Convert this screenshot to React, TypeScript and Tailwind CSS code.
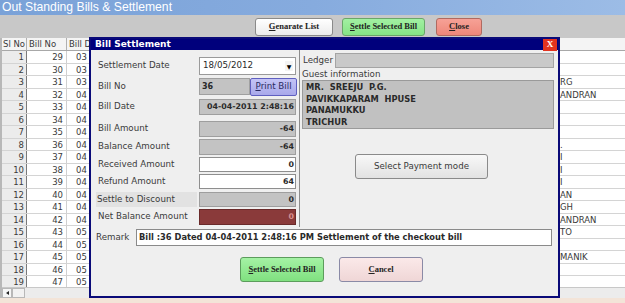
import React from 'react';

const sans = "font-['DejaVu_Sans',Verdana,sans-serif]";
const serif = "font-['Liberation_Serif',serif]";

const nameBits: Record<number, string> = {
  3: 'RG',
  4: 'ANDRAN',
  8: '.',
  9: 'I',
  10: 'I',
  11: 'I',
  12: 'AN',
  13: 'GH',
  14: 'ANDRAN',
  15: 'TO',
  17: 'MANIK',
};

// only the part of each row left visible beside the dialog
const rows = Array.from({ length: 19 }, (_, i) => {
  const sl = i + 1;
  const month = sl <= 3 ? '03' : sl <= 14 ? '04' : '05';
  return { sl, bill: 29 + i, date: month, name: nameBits[sl] ?? '' };
});

function BillGrid() {
  return (
    <div className={`flex h-[260px] flex-col border-l-2 border-[#b8b8b8] bg-white text-[8.5px] text-[#3a3a3a] ${sans}`}>
      <div className="flex h-[13px] shrink-0 border-b border-[#a8a8a8] bg-[#f4f4f4]">
        <div className="w-[25px] border-r border-[#b0b0b0] pl-[1px] leading-[12px]">Sl No</div>
        <div className="w-[40px] border-r border-[#b0b0b0] pl-[2px] leading-[12px]">Bill No</div>
        <div className="w-[92px] border-r border-[#b0b0b0] pl-[2px] leading-[12px]">Bill D</div>
        <div className="w-[400px] border-r border-[#b0b0b0]" />
        <div className="flex-1" />
      </div>
      <div className="flex-1 overflow-hidden">
        {rows.map(r => (
          <div key={r.sl} className="flex h-[12.5px] border-b border-[#d4d4d4] leading-[12px]">
            <div className="w-[25px] border-r border-[#7a7a7a] bg-[#ececec] pr-[2px] text-right">{r.sl}</div>
            <div className="w-[40px] border-r border-[#d0d0d0] pr-[3px] text-right">{r.bill}</div>
            <div className="w-[92px] border-r border-[#d0d0d0] pl-[9px]">{r.date}</div>
            <div className="w-[400px] border-r border-[#d0d0d0]" />
            <div className="flex-1 pl-[1px]">{r.name}</div>
          </div>
        ))}
      </div>
      <div className="flex h-[11px] shrink-0 border-t border-[#c8c8c8] bg-[#ececec]">
        <div className="flex w-[10px] items-center justify-center border border-[#b8b8b8] bg-[#f6f6f6]">
          <div className="h-0 w-0 border-y-[2.5px] border-r-[3px] border-y-transparent border-r-[#222]" />
        </div>
        <div className="w-[13px] border border-[#b8b8b8] bg-[#f2f2f2]" />
      </div>
    </div>
  );
}

function ToolButton({ label, className }: { label: string; className: string }) {
  return (
    <button
      className={`flex h-[18px] items-center justify-center whitespace-nowrap rounded-[3px] border text-[8.5px] font-bold text-[#222] ${serif} ${className}`}
    >
      <span className="underline decoration-[0.5px] underline-offset-1">{label[0]}</span>
      {label.slice(1)}
    </button>
  );
}

function FieldRow({
  label,
  top,
  h,
  labelClass = '',
  children,
}: {
  label: string;
  top: string;
  h: string;
  labelClass?: string;
  children: React.ReactNode;
}) {
  return (
    <div className={`flex items-center ${top} ${h}`}>
      <div className={`w-[101px] whitespace-nowrap ${labelClass}`}>{label}</div>
      {children}
    </div>
  );
}

function ValueBox({ value, tone }: { value: string; tone: 'gray' | 'white' | 'red' }) {
  const toneClass =
    tone === 'gray'
      ? 'bg-[#c3c3c3] border-[#9e9e9e] text-[#2a2a2a]'
      : tone === 'white'
        ? 'bg-white border-[#8e8e8e] text-[#2a2a2a]'
        : 'bg-[#8a3a3a] border-[#6a2a2a] text-[#d89090]';
  return (
    <div
      className={`flex h-full w-[97px] items-center justify-end whitespace-nowrap border pr-[1px] text-[7.9px] font-bold ${toneClass}`}
    >
      {value}
    </div>
  );
}

function SettlementDialog() {
  return (
    <div className={`absolute left-[89px] top-[37px] flex h-[261px] w-[471px] flex-col border-2 border-[#0a0a78] bg-[#efefef] text-[8.7px] text-[#3a3a3a] ${sans}`}>
      <div className="flex h-[11px] shrink-0 items-center justify-between bg-[#00007c] pl-[4px] pr-[1px]">
        <span className="text-[9px] font-bold text-white">Bill Settlement</span>
        <span className={`flex h-[12px] w-[14px] items-center justify-center bg-[#e2331f] text-[9px] font-bold text-white ${serif}`}>
          X
        </span>
      </div>

      <div className="flex h-[177px] shrink-0">
        <div className="w-[209px] border-r border-[#8c8c8c] pl-[7px]">
          <FieldRow label="Settlement Date" top="mt-[7px]" h="h-[18px]">
            <div className="flex h-full w-[97px] items-center justify-between border border-[#9a9a9a] bg-white pl-[3px] pr-[2px] text-[#2a2a2a]">
              <span>18/05/2012</span>
              <span className="flex h-[10px] w-[8px] items-center justify-center bg-[#f4f4f4] text-[6px] text-black">▼</span>
            </div>
          </FieldRow>
          <FieldRow label="Bill No" top="mt-[3px]" h="h-[17px]">
            <div className="flex h-full w-[51px] items-center border border-[#a0a0a0] bg-[#c3c3c3] pl-[2px] text-[8px] font-bold text-[#2a2a2a]">
              36
            </div>
            <div className="flex h-[18px] w-[47px] items-center justify-center whitespace-nowrap rounded-[2px] border border-[#5f5fc0] bg-gradient-to-b from-[#c4c4f6] to-[#a8a8ea] text-[#2a2a60]">
              <span className="underline decoration-[0.5px]">P</span>rint Bill
            </div>
          </FieldRow>
          <FieldRow label="Bill Date" top="mt-[4px]" h="h-[16px]">
            <ValueBox value="04-04-2011 2:48:16" tone="gray" />
          </FieldRow>
          <FieldRow label="Bill Amount" top="mt-[6px]" h="h-[16px]">
            <ValueBox value="-64" tone="gray" />
          </FieldRow>
          <FieldRow label="Balance Amount" top="mt-[2px]" h="h-[16px]">
            <ValueBox value="-64" tone="gray" />
          </FieldRow>
          <FieldRow label="Received Amount" top="mt-[2px]" h="h-[15px]">
            <ValueBox value="0" tone="white" />
          </FieldRow>
          <FieldRow label="Refund Amount" top="mt-[2px]" h="h-[15px]">
            <ValueBox value="64" tone="white" />
          </FieldRow>
          <FieldRow
            label="Settle to Discount"
            top="mt-[3px]"
            h="h-[15px]"
            labelClass="-ml-[2px] mr-[2px] bg-[#e2e2e2] pl-[1px] leading-[15px]"
          >
            <ValueBox value="0" tone="gray" />
          </FieldRow>
          <FieldRow label="Net Balance Amount" top="mt-[2px]" h="h-[16px]">
            <ValueBox value="0" tone="red" />
          </FieldRow>
        </div>

        <div className="flex-1 pl-[2px] pr-[4px]">
          <div className="mt-[3px] flex h-[15px] items-center">
            <span className="w-[33px] pl-[1px]">Ledger</span>
            <div className="h-full flex-1 border border-[#a4a4a4] bg-[#c9c9c9]" />
          </div>
          <div className="mt-[1px] h-[11px] leading-[11px]">Guest information</div>
          <div className="h-[49px] border border-[#9a9a9a] bg-[#c1c1c1] pl-[3px] pt-[1px] text-[8.3px] font-bold leading-[11.5px] text-[#2a2a2a]">
            <div>MR.&nbsp; SREEJU&nbsp; P.G.</div>
            <div>PAVIKKAPARAM&nbsp; HPUSE</div>
            <div>PANAMUKKU</div>
            <div>TRICHUR</div>
          </div>
          <button className="ml-[53px] mt-[25px] flex h-[25px] w-[133px] items-center justify-center rounded-[3px] border border-[#8a8a8a] bg-gradient-to-b from-[#f8f8f8] to-[#e2e2e2] text-[8.7px] text-[#3a3a3a]">
            Select Payment mode
          </button>
        </div>
      </div>

      <div className="mt-[2px] flex h-[17px] items-center pl-[5px]">
        <span className="w-[40px] whitespace-nowrap">Remark</span>
        <div className="flex h-full w-[416px] items-center whitespace-nowrap border border-[#8a8a8a] bg-white pl-[2px] text-[8.3px] font-bold text-[#2a2a2a]">
          Bill :36 Dated 04-04-2011 2:48:16 PM Settlement of the checkout bill
        </div>
      </div>

      <div className="ml-[149px] mt-[11px] flex gap-[15px]">
        <ToolButton
          label="Settle Selected Bill"
          className="h-[25px] w-[84px] border-[#5c9c5c] bg-gradient-to-b from-[#a4f2a4] to-[#80e080]"
        />
        <ToolButton
          label="Cancel"
          className="h-[25px] w-[84px] border-[#8a8aa6] bg-gradient-to-b from-[#fbe9e9] to-[#efd6d6]"
        />
      </div>
    </div>
  );
}

export default function App() {
  return (
    <div className="relative h-[303px] w-[625px] overflow-hidden bg-[#f3e4d8]">
      <div className="flex h-[15px] items-center bg-gradient-to-r from-[#7aa2d8] via-[#86abde] to-[#9cbce6] pl-[2px]">
        <span className="text-[12.2px] leading-none text-white font-['Liberation_Sans',Arial,sans-serif]">
          Out Standing Bills &amp; Settlement
        </span>
      </div>
      <div className="flex h-[23px] items-center gap-[9px] bg-[#c8c8c8] pl-[255px]">
        <ToolButton label="Genarate List" className="w-[78px] border-[#8a8a8a] bg-gradient-to-b from-[#ffffff] to-[#ececec]" />
        <ToolButton label="Settle Selected Bill" className="w-[83px] border-[#6aa66a] bg-gradient-to-b from-[#a2f0a2] to-[#86e486]" />
        <ToolButton label="Close" className="ml-[2px] w-[46px] border-[#b06a60] bg-gradient-to-b from-[#f6a196] to-[#ee877a]" />
      </div>
      <BillGrid />
      <SettlementDialog />
    </div>
  );
}
